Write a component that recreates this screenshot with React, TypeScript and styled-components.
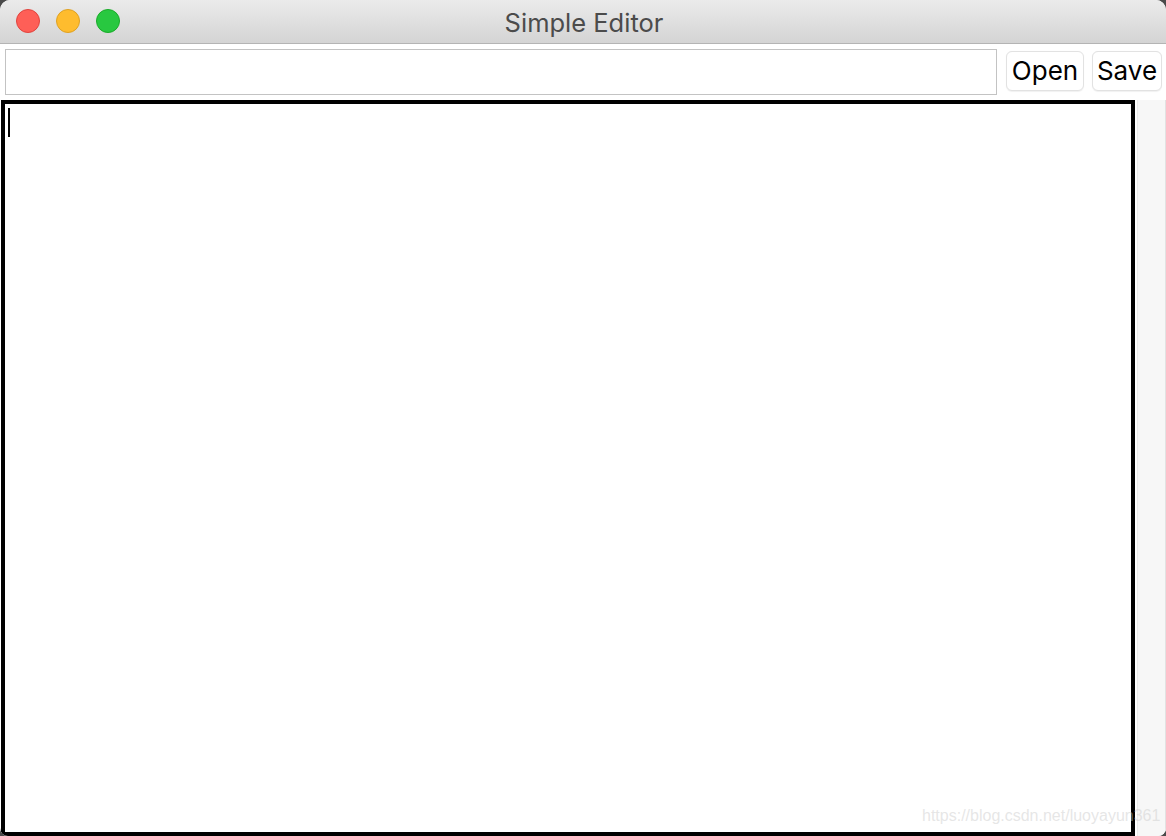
import React from "react";
import styled, { createGlobalStyle } from "styled-components";

const Global = createGlobalStyle`
  html, body { margin: 0; padding: 0; background: #4a4a4a; }
  #root { width: 1166px; height: 836px; }
  * { box-sizing: border-box; }
`;

const Window = styled.div`
  width: 1166px;
  height: 836px;
  display: flex;
  flex-direction: column;
  background: #ffffff;
  border-radius: 10px 10px 8px 8px;
  overflow: hidden;
  position: relative;
  font-family: Inter, "Liberation Sans", sans-serif;
`;

const TitleBar = styled.div`
  height: 44px;
  flex: none;
  display: flex;
  align-items: center;
  position: relative;
  background: linear-gradient(#ebebeb, #d4d4d4);
  border-bottom: 1px solid #b4b4b4;
`;

const Lights = styled.div`
  display: flex;
  gap: 16px;
  padding-left: 16px;
  padding-bottom: 1px;
`;

const Light = styled.span<{ $c: string; $b: string }>`
  width: 24px;
  height: 24px;
  border-radius: 50%;
  background: ${(p) => p.$c};
  border: 1px solid ${(p) => p.$b};
`;

const Title = styled.div`
  position: absolute;
  left: 0;
  right: 0;
  top: 0;
  bottom: 0;
  display: flex;
  align-items: center;
  justify-content: center;
  font-size: 25.5px;
  color: #4b4b4b;
  padding-left: 2px;
  padding-top: 1px;
`;

const Toolbar = styled.div`
  height: 56px;
  flex: none;
  display: flex;
  align-items: flex-start;
  padding: 5px 4px 0 5px;
`;

const Field = styled.input`
  width: 992px;
  height: 46px;
  border: 1px solid #c3c3c3;
  background: #fff;
  outline: none;
  padding: 0 6px;
  font-size: 18px;
  font-family: inherit;
`;

const Button = styled.button<{ $w: number; $ml: number }>`
  width: ${(p) => p.$w}px;
  height: 40px;
  margin-top: 2px;
  margin-left: ${(p) => p.$ml}px;
  border: 1px solid #e2e2e2;
  border-radius: 6px;
  background: #ffffff;
  box-shadow: 0 0.5px 1px rgba(0, 0, 0, 0.06);
  font-family: inherit;
  font-size: 26px;
  color: #000;
  padding: 0 0 1px 0;
  display: flex;
  align-items: center;
  justify-content: center;
`;

const Body = styled.div`
  flex: 1;
  display: flex;
  min-height: 0;
`;

const Editor = styled.div`
  width: 1134px;
  margin-left: 1px;
  height: 100%;
  border: 4px solid #000;
  background: #fff;
  padding: 4px 3px;
`;

const Caret = styled.span`
  display: block;
  width: 2px;
  height: 29px;
  background: #000;
`;

const Track = styled.div`
  flex: 1;
  margin-left: 2px;
  background: #f7f7f7;
  border-left: 1px solid #ececec;
  border-right: 1px solid #e2e2e2;
`;

const Watermark = styled.div`
  position: absolute;
  left: 922px;
  top: 807px;
  font-family: "Liberation Sans", Arial, sans-serif;
  font-size: 16px;
  color: rgba(205, 205, 205, 0.5);
  pointer-events: none;
  white-space: nowrap;
`;

export default function App() {
  return (
    <>
      <Global />
      <Window>
        <TitleBar>
          <Lights>
            <Light $c="#fe5f57" $b="#e0443e" />
            <Light $c="#febc2e" $b="#dea123" />
            <Light $c="#28c840" $b="#1aab29" />
          </Lights>
          <Title>Simple Editor</Title>
        </TitleBar>
        <Toolbar>
          <Field />
          <Button $w={78} $ml={9}>Open</Button>
          <Button $w={70} $ml={8}>Save</Button>
        </Toolbar>
        <Body>
          <Editor>
            <Caret />
          </Editor>
          <Track />
        </Body>
        <Watermark>https://blog.csdn.net/luoyayun361</Watermark>
      </Window>
    </>
  );
}
